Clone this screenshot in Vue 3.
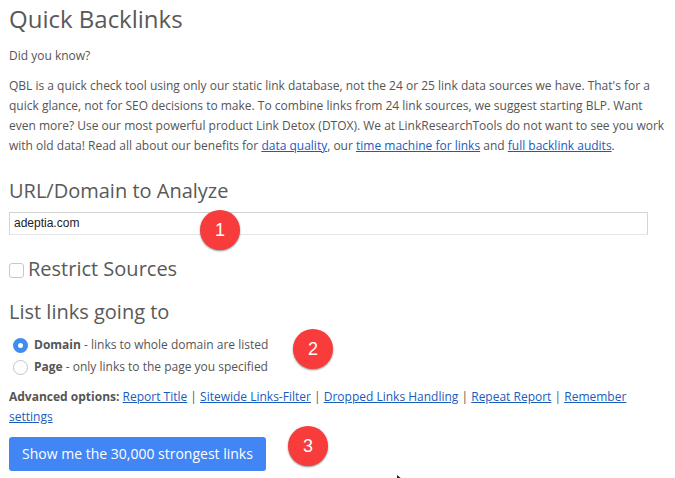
<script setup>
const badges = [
  { n: 1, x: 200, y: 210 },
  { n: 2, x: 293, y: 329 },
  { n: 3, x: 288, y: 426 }
]
</script>

<template>
  <div class="page">
    <h1>Quick Backlinks</h1>
    <p class="know">Did you know?</p>
    <p class="intro">QBL is a quick check tool using only our static link database, not the 24 or 25 link data sources we have. That's for a quick glance, not for SEO decisions to make. To combine links from 24 link sources, we suggest starting BLP. Want even more? Use our most powerful product Link Detox (DTOX). We at LinkResearchTools do not want to see you work with old data! Read all about our benefits for <a>data quality</a>, our <a>time machine for links</a> and <a>full backlink audits</a>.</p>
    <h2 class="url-title">URL/Domain to Analyze</h2>
    <div class="input">adeptia.com</div>
    <div class="restrict"><span class="check"></span><span>Restrict Sources</span></div>
    <h2 class="list-title">List links going to</h2>
    <div class="radio first"><span class="dot on"></span><span><b>Domain</b> - links to whole domain are listed</span></div>
    <div class="radio"><span class="dot"></span><span><b>Page</b> - only links to the page you specified</span></div>
    <p class="advanced"><b>Advanced options:</b> <a>Report Title</a> | <a>Sitewide Links-Filter</a> | <a>Dropped Links Handling</a> | <a>Repeat Report</a> | <a>Remember settings</a></p>
    <button class="go">Show me the 30,000 strongest links</button>
    <div v-for="b in badges" :key="b.n" class="badge" :style="{ left: b.x + 'px', top: b.y + 'px' }">{{ b.n }}</div>
    <svg class="cursor" width="8" height="6" viewBox="0 0 8 6"><path d="M1 0 L1 6 L3 4 L6 4 Z" fill="#222" /></svg>
  </div>
</template>

<style>
html, body { margin: 0; background: #fff; overflow: hidden; }
</style>

<style scoped>
.page {
  position: relative;
  width: 675px;
  height: 478px;
  overflow: hidden;
  box-sizing: border-box;
  padding: 0 6px 0 9px;
  background: #fff;
  color: #555;
  font: 12px/20px "Open Sans", sans-serif;
}
h1, h2, p { margin: 0; font-weight: 400; }
h1 { font-size: 24px; line-height: 34px; color: #595959; padding-top: 2px; }
.know { margin-top: 10px; }
.intro { margin-top: 10px; }
a { color: #1a5cbc; text-decoration: underline; }
h2 { font-size: 20px; line-height: 28px; color: #595959; }
.url-title { margin-top: 21px; }
.input {
  box-sizing: border-box;
  width: 639px;
  height: 23px;
  margin-top: 7px;
  padding-left: 4px;
  border: 1px solid #d4d4d4;
  border-bottom-color: #e6e6e6;
  font: 12px/20px "Liberation Sans", sans-serif;
  color: #222;
}
.restrict {
  display: flex;
  align-items: center;
  gap: 4px;
  margin-top: 20px;
  font-size: 20px;
  line-height: 28px;
  color: #595959;
}
.check {
  box-sizing: border-box;
  width: 15px;
  height: 15px;
  margin-top: 3px;
  border: 1px solid #c8c8c8;
  border-radius: 3px;
}
.list-title { margin-top: 15px; }
.radio {
  display: flex;
  align-items: center;
  gap: 6px;
  height: 22px;
  padding-left: 4px;
}
.radio.first { margin-top: 8px; }
.radio b, .advanced b { font-weight: 700; }
.dot {
  box-sizing: border-box;
  width: 15px;
  height: 15px;
  border: 1px solid #c4c4c4;
  border-radius: 50%;
  background: #fff;
}
.dot.on { border: 5px solid #3f8cf4; }
.advanced { margin-top: 9px; }
.go {
  display: block;
  box-sizing: border-box;
  width: 257px;
  height: 34px;
  margin-top: 10px;
  padding: 0 0 2px;
  border: 0;
  border-radius: 3px;
  background: #4285f4;
  color: #fff;
  font: 14px "Open Sans", sans-serif;
}
.badge {
  position: absolute;
  box-sizing: border-box;
  width: 40px;
  height: 40px;
  border-radius: 50%;
  background: #f83b3b;
  box-shadow: 0 1px 2px rgba(0, 0, 0, 0.45);
  color: #fff;
  font: 18px/40px "Liberation Sans", sans-serif;
  text-align: center;
}
.cursor { position: absolute; left: 396px; top: 475px; }
</style>
